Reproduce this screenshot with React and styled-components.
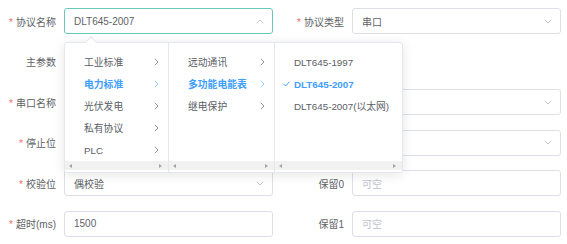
import React from "react"
import styled, { createGlobalStyle } from "styled-components"

const GlobalStyle = createGlobalStyle`
  body {
    margin: 0;
    background: #fff;
    font-family: "Liberation Sans", "Noto Sans CJK SC", sans-serif;
  }
`

const Form = styled.div`
  display: grid;
  grid-template-columns: 273px 273px;
  column-gap: 15px;
  row-gap: 14.6px;
  padding-top: 8px;
`

const FormItem = styled.div`
  display: flex;
  align-items: center;
  height: 26px;
`

const Label = styled.label`
  width: 56px;
  margin-right: 8px;
  flex-shrink: 0;
  text-align: right;
  font-size: 10px;
  color: #606266;
  white-space: nowrap;
`

const Star = styled.span`
  color: #f56c6c;
  margin-right: 3px;
`

const Control = styled.div`
  position: relative;
  flex: 1;
  height: 26px;
`

const InputBox = styled.div`
  box-sizing: border-box;
  display: flex;
  align-items: center;
  height: 100%;
  padding: 0 8px 0 9px;
  border: 1px solid ${p => (p.focused ? "#66c9bb" : "#dcdfe6")};
  border-radius: 3px;
  background: #fff;
  font-size: 10px;
  color: ${p => (p.placeholder ? "#c0c4cc" : "#606266")};
`

const Value = styled.span`
  flex: 1;
`

const Dropdown = styled.div`
  position: absolute;
  top: calc(100% + 8px);
  left: 0;
  z-index: 10;
  display: flex;
  height: 131px;
  box-sizing: border-box;
  background: #fff;
  border: 1px solid #e4e7ed;
  border-radius: 3px;
  box-shadow: 0 2px 12px rgba(0, 0, 0, 0.1);
`

const PopArrow = styled.div`
  position: absolute;
  top: -5px;
  left: 22px;
  width: 7px;
  height: 7px;
  background: #fff;
  border-top: 1px solid #e4e7ed;
  border-left: 1px solid #e4e7ed;
  transform: rotate(45deg);
`

const Panel = styled.div`
  display: flex;
  flex-direction: column;
  width: ${p => p.width}px;
  box-sizing: border-box;
  border-right: ${p => (p.last ? "none" : "1px solid #e4e7ed")};
`

const List = styled.div`
  flex: 1;
  padding-top: 8px;
`

const Node = styled.div`
  position: relative;
  display: flex;
  align-items: center;
  height: 22px;
  padding: 0 9px 0 19px;
  font-size: 9.8px;
  white-space: nowrap;
  color: ${p => (p.active ? "#409eff" : "#5a5e66")};
  font-weight: ${p => (p.active ? 700 : 400)};
`

const NodeText = styled.span`
  flex: 1;
`

const CheckMark = styled.span`
  position: absolute;
  left: 8px;
  top: 8px;
  display: flex;
`

const ScrollBar = styled.div`
  display: flex;
  align-items: center;
  justify-content: space-between;
  height: 9px;
  margin-bottom: 2px;
  padding: 0 6px 0 4px;
  background: #f1f1f1;
`

const Tri = styled.span`
  width: 0;
  height: 0;
  border-top: 2px solid transparent;
  border-bottom: 2px solid transparent;
  ${p =>
    p.right
      ? "border-left: 3px solid #a3a3a3;"
      : "border-right: 3px solid #a3a3a3;"}
`

const Chevron = ({ dir = "down", color = "#c0c4cc" }) => {
  if (dir === "right") {
    return (
      <svg width="5" height="8" viewBox="0 0 5 8">
        <polyline points="0.8,0.8 4,4 0.8,7.2" fill="none" stroke={color} strokeWidth="1" />
      </svg>
    )
  }
  const pts = dir === "up" ? "0.8,4.2 4,1 7.2,4.2" : "0.8,0.8 4,4 7.2,0.8"
  return (
    <svg width="8" height="5" viewBox="0 0 8 5">
      <polyline points={pts} fill="none" stroke={color} strokeWidth="1" />
    </svg>
  )
}

const Check = () => (
  <svg width="7" height="6" viewBox="0 0 7 6">
    <polyline points="0.6,3 2.6,5 6.4,0.8" fill="none" stroke="#409eff" strokeWidth="1" />
  </svg>
)

const panels = [
  {
    width: 104,
    items: [
      { label: "工业标准", more: true },
      { label: "电力标准", more: true, active: true },
      { label: "光伏发电", more: true },
      { label: "私有协议", more: true },
      { label: "PLC", more: true },
    ],
  },
  {
    width: 106,
    items: [
      { label: "远动通讯", more: true },
      { label: "多功能电能表", more: true, active: true },
      { label: "继电保护", more: true },
    ],
  },
  {
    width: 127,
    items: [
      { label: "DLT645-1997" },
      { label: "DLT645-2007", active: true, checked: true },
      { label: "DLT645-2007(以太网)" },
    ],
  },
]

const Cascader = () => (
  <Dropdown>
    <PopArrow />
    {panels.map((panel, i) => (
      <Panel key={i} width={panel.width} last={i === panels.length - 1}>
        <List>
          {panel.items.map(item => (
            <Node key={item.label} active={item.active}>
              {item.checked && (
                <CheckMark>
                  <Check />
                </CheckMark>
              )}
              <NodeText>{item.label}</NodeText>
              {item.more && (
                <Chevron dir="right" color={item.active ? "#8cc5ff" : "#909399"} />
              )}
            </Node>
          ))}
        </List>
        <ScrollBar>
          <Tri />
          <Tri right />
        </ScrollBar>
      </Panel>
    ))}
  </Dropdown>
)

const Field = ({ label, required, value, placeholder, select, focused, children }) => (
  <FormItem>
    <Label>
      {required && <Star>*</Star>}
      {label}
    </Label>
    <Control>
      <InputBox focused={focused} placeholder={!value && placeholder ? 1 : 0}>
        <Value>{value || placeholder}</Value>
        {select && <Chevron dir={focused ? "up" : "down"} />}
      </InputBox>
      {children}
    </Control>
  </FormItem>
)

const App = () => (
  <>
    <GlobalStyle />
    <Form>
      <Field label="协议名称" required value="DLT645-2007" select focused>
        <Cascader />
      </Field>
      <Field label="协议类型" required value="串口" select />

      <FormItem>
        <Label>主参数</Label>
      </FormItem>
      <div />

      {/* the values and right-hand labels of these two rows sit under the open cascader */}
      <Field label="串口名称" required select />
      <Field select />

      <Field label="停止位" required select />
      <Field select />

      <Field label="校验位" required value="偶校验" select />
      <Field label="保留0" placeholder="可空" />

      <Field label="超时(ms)" required value="1500" />
      <Field label="保留1" placeholder="可空" />
    </Form>
  </>
)

export default App
